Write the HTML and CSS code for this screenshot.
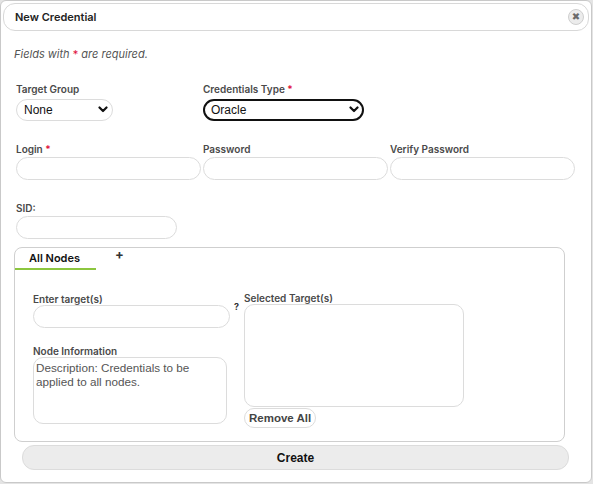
FILE: index.html
```html
<!DOCTYPE html>
<html lang="en">
<head>
    <meta charset="UTF-8">
    <meta name="viewport" content="width=device-width, initial-scale=1.0">
    <title>New Credential</title>
    <link rel="stylesheet" href="styles.css">
</head>
<body>
    <div class="dialog">
        <div class="titlebar">
            <span class="title">New Credential</span>
            <button class="close" title="Close">&#10006;</button>
        </div>

        <p class="note">Fields with <span class="req">*</span> are required.</p>

        <div class="grid row-top">
            <div class="field">
                <label>Target Group</label>
                <div class="select-wrap small">
                    <select><option>None</option></select>
                    <svg class="chev" width="10" height="7" viewBox="0 0 10 7"><path d="M1.5 1.5 L5 5 L8.5 1.5" fill="none" stroke="#111" stroke-width="2.2" stroke-linecap="round" stroke-linejoin="round"/></svg>
                </div>
            </div>
            <div class="field">
                <label>Credentials Type <span class="req">*</span></label>
                <div class="select-wrap wide focused">
                    <select><option>Oracle</option></select>
                    <svg class="chev" width="10" height="7" viewBox="0 0 10 7"><path d="M1.5 1.5 L5 5 L8.5 1.5" fill="none" stroke="#111" stroke-width="2.2" stroke-linecap="round" stroke-linejoin="round"/></svg>
                </div>
            </div>
        </div>

        <div class="grid row">
            <div class="field">
                <label>Login <span class="req">*</span></label>
                <input type="text" class="input">
            </div>
            <div class="field">
                <label>Password</label>
                <input type="password" class="input">
            </div>
            <div class="field">
                <label>Verify Password</label>
                <input type="password" class="input">
            </div>
        </div>

        <div class="grid row">
            <div class="field">
                <label>SID:</label>
                <input type="text" class="input sid">
            </div>
        </div>

        <div class="tabs">
            <div class="tab-bar">
                <span class="tab active">All Nodes</span>
                <span class="tab-add">+</span>
            </div>
            <div class="tab-body">
                <div class="col-left">
                    <div class="field">
                        <label>Enter target(s)</label>
                        <input type="text" class="input">
                    </div>
                    <div class="field node-info">
                        <label>Node Information</label>
                        <textarea class="area" readonly>Description: Credentials to be applied to all nodes.</textarea>
                    </div>
                </div>
                <span class="help">?</span>
                <div class="col-right">
                    <div class="field">
                        <label>Selected Target(s)</label>
                        <div class="target-list"></div>
                    </div>
                    <button class="btn-small">Remove All</button>
                </div>
            </div>
        </div>

        <button class="create">Create</button>
    </div>
</body>
</html>
```

FILE: styles.css
```css
html, body {
    margin: 0;
    background-color: #e4e4e4;
}

body {
    font-family: Inter, "Liberation Sans", sans-serif;
    color: #333;
}

.dialog {
    box-sizing: border-box;
    width: 592px;
    height: 483px;
    padding: 2px;
    background-color: #fff;
    border: 1px solid #c9c9c9;
    border-radius: 6px;
}

.titlebar {
    box-sizing: border-box;
    height: 28px;
    display: flex;
    align-items: center;
    justify-content: space-between;
    padding: 0 4px 0 11px;
    border: 1px solid #d8d8d8;
    border-radius: 12px;
}

.title {
    font-size: 11px;
    font-weight: 600;
    color: #222;
}

.close {
    width: 16px;
    height: 16px;
    padding: 0;
    border: 1px solid #cfcfcf;
    border-radius: 50%;
    background-color: #ececec;
    color: #6a6a6a;
    font-size: 10px;
    line-height: 14px;
    text-align: center;
    font-family: "DejaVu Sans", sans-serif;
}

.note {
    margin: 16px 0 0 11px;
    font-size: 11px;
    line-height: 14px;
    font-style: italic;
    color: #555;
}

.req {
    color: #e0103a;
    font-style: normal;
}

.grid {
    display: grid;
    grid-template-columns: 185px 185px 186px;
    column-gap: 2px;
    margin-left: 13px;
}

.row-top {
    margin-top: 22px;
}

.row {
    margin-top: 22px;
}

.field {
    display: flex;
    flex-direction: column;
    align-items: flex-start;
}

.field label {
    font-size: 10px;
    line-height: 13px;
    font-weight: 600;
    color: #4a4a4a;
    margin-bottom: 1px;
}

.row-top .field label {
    margin-bottom: 2px;
}

.select-wrap {
    position: relative;
}

.select-wrap select {
    box-sizing: border-box;
    appearance: none;
    height: 22px;
    padding: 0 20px 0 7px;
    border: 1px solid #dcdcdc;
    border-radius: 11px;
    background-color: #fff;
    font-family: "Liberation Sans", Arial, sans-serif;
    font-size: 12px;
    color: #111;
}

.select-wrap.small select {
    width: 97px;
}

.select-wrap.wide select {
    width: 161px;
}

.select-wrap.focused select {
    border: 2px solid #111;
    padding-left: 6px;
}

.chev {
    position: absolute;
    right: 5px;
    top: 8px;
    pointer-events: none;
}

.input {
    box-sizing: border-box;
    width: 185px;
    height: 23px;
    border: 1px solid #dcdcdc;
    border-radius: 12px;
    padding: 0 8px;
    background-color: #fff;
}

.input.sid {
    width: 161px;
}

.tabs {
    box-sizing: border-box;
    width: 551px;
    height: 195px;
    margin: 8px 0 0 11px;
    border: 1px solid #cfcfcf;
    border-radius: 8px;
}

.tab-bar {
    display: flex;
    align-items: flex-start;
    height: 22px;
}

.tab {
    box-sizing: border-box;
    width: 81px;
    height: 22px;
    padding: 3px 0 0 14px;
    font-size: 11px;
    font-weight: 600;
    color: #111;
}

.tab.active {
    border-bottom: 2px solid #8cc63f;
}

.tab-add {
    margin: 0 0 0 19px;
    font-size: 13px;
    font-weight: 700;
    line-height: 13px;
    color: #333;
}

.tab-body {
    display: flex;
    align-items: flex-start;
    padding: 23px 0 0 18px;
}

.tab-body .field label {
    margin-bottom: -1px;
}

.col-left {
    width: 197px;
}

.col-left .input {
    width: 197px;
}

.node-info {
    margin-top: 17px;
}

.area {
    box-sizing: border-box;
    width: 194px;
    height: 67px;
    margin: 0;
    padding: 3px 2px;
    border: 1px solid #dcdcdc;
    border-radius: 10px;
    resize: none;
    font-family: "Liberation Sans", Arial, sans-serif;
    font-size: 11.7px;
    line-height: 14px;
    color: #555;
}

.help {
    width: 14px;
    padding: 8px 0 0 4px;
    box-sizing: border-box;
    font-size: 9px;
    font-weight: 700;
    color: #333;
}

.col-right {
    margin-top: -1px;
}

.target-list {
    box-sizing: border-box;
    width: 220px;
    height: 103px;
    border: 1px solid #dcdcdc;
    border-radius: 10px;
}

.btn-small {
    display: block;
    height: 20px;
    margin-top: 1px;
    padding: 0 4px;
    border: 1px solid #dcdcdc;
    border-radius: 10px;
    background-color: #fff;
    font-family: "Liberation Sans", Arial, sans-serif;
    font-size: 11.5px;
    font-weight: 700;
    color: #444;
}

.create {
    display: block;
    box-sizing: border-box;
    width: 547px;
    height: 25px;
    margin: 3px 0 0 19px;
    border: 1px solid #dcdcdc;
    border-radius: 12px;
    background-color: #ececec;
    font-family: "Liberation Sans", Arial, sans-serif;
    font-size: 12px;
    font-weight: 700;
    color: #111;
}
```
